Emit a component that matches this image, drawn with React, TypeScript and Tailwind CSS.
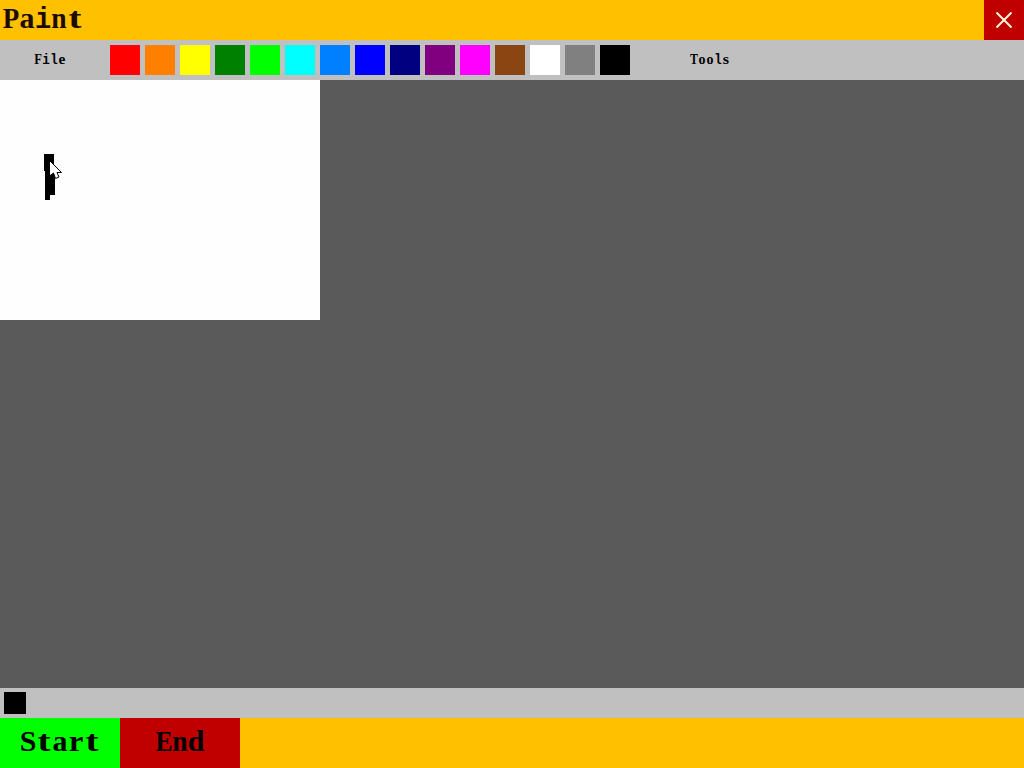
import React from 'react';

const COLORS = [
  'bg-[#ff0000]',
  'bg-[#ff8000]',
  'bg-[#ffff00]',
  'bg-[#008000]',
  'bg-[#00ff00]',
  'bg-[#00ffff]',
  'bg-[#0080ff]',
  'bg-[#0000ff]',
  'bg-[#000080]',
  'bg-[#800080]',
  'bg-[#ff00ff]',
  'bg-[#8b4513]',
  'bg-white',
  'bg-[#808080]',
  'bg-black',
];

// narrow letters take the slab shapes of the mono face or are stretched,
// wide ones are squeezed, so that each fills its cell
const GLYPH_STYLE: Record<string, string> = {
  i: 'font-["Liberation_Mono",monospace] scale-x-[0.9]',
  l: 'font-["Liberation_Mono",monospace] scale-x-[0.9]',
  t: 'scale-x-[1.3]',
  r: 'scale-x-[1.1]',
  s: 'scale-x-[1.15]',
  e: 'scale-x-[1.1]',
  P: 'scale-x-[0.9]',
  F: 'scale-x-[0.9]',
  E: 'scale-x-[0.85]',
  T: 'scale-x-[0.85]',
  n: 'scale-x-[0.92]',
};

type CellTextProps = {
  text: string;
  large?: boolean;
};

// fixed width cells, like the text mode font of the desktop
const CellText: React.FC<CellTextProps> = ({ text, large = false }) => (
  <span
    className={
      large
        ? 'inline-flex items-baseline font-["Liberation_Serif",serif] text-[30px] leading-8 font-bold'
        : 'inline-flex items-baseline font-["Liberation_Serif",serif] text-[14px] leading-4 font-bold'
    }
  >
    {text.split('').map((char, index) => (
      <span
        key={index}
        className={`flex justify-center ${large ? 'w-4' : 'w-2'} ${GLYPH_STYLE[char] ?? ''}`}
      >
        {char}
      </span>
    ))}
  </span>
);

const Cursor = () => (
  <svg className="absolute left-[48px] top-[79px]" width="16" height="22" viewBox="0 0 16 22">
    <path
      d="M1.5 1.5V17L5.5 14L7.5 19.5L11 18L9 13.5H13.5Z"
      fill="#fff"
      stroke="#000"
      strokeWidth="1"
    />
  </svg>
);

const Canvas = () => (
  <div className="relative h-60 w-80 bg-[#fefefe]">
    <svg className="block" width="320" height="240" shapeRendering="crispEdges">
      <path d="M44 74H54V94H55V115H50V120H45V91H44Z" fill="#000" />
    </svg>
    <Cursor />
  </div>
);

const App: React.FC = () => {
  return (
    <div className="flex h-screen w-full flex-col overflow-hidden bg-[#5a5a5a] text-black">
      <header className="flex h-10 shrink-0 items-start justify-between bg-[#ffc000]">
        <div className="pl-[3px] pt-0.5 text-[#1c0c00]">
          <CellText text="Paint" large />
        </div>
        <button className="flex size-10 items-center justify-center bg-[#c00000]" aria-label="Close">
          <svg width="18" height="18" viewBox="0 0 18 18">
            <path d="M1.5 1.5L16.5 16.5M16.5 1.5L1.5 16.5" stroke="#fff4dc" strokeWidth="2" />
          </svg>
        </button>
      </header>

      <nav className="flex h-10 shrink-0 items-center bg-[#c0c0c0]">
        <button className="flex w-[100px] justify-center">
          <CellText text="File" />
        </button>
        <div className="ml-2.5 flex gap-[5px]">
          {COLORS.map((color) => (
            <button key={color} className={`size-[30px] ${color}`} />
          ))}
        </div>
        <button className="ml-[30px] flex w-[100px] justify-center">
          <CellText text="Tools" />
        </button>
      </nav>

      <main className="min-h-0 flex-1">
        <Canvas />
      </main>

      <div className="flex h-[30px] shrink-0 items-center bg-[#c0c0c0] pl-1">
        <div className="size-[22px] bg-black" />
      </div>

      <footer className="flex h-[50px] shrink-0 bg-[#ffc000]">
        <button className="flex w-[120px] items-start justify-center bg-[#00ff00] pt-[7px]">
          <CellText text="Start" large />
        </button>
        <button className="flex w-[120px] items-start justify-center bg-[#c00000] pt-[7px]">
          <CellText text="End" large />
        </button>
      </footer>
    </div>
  );
};

export default App;
